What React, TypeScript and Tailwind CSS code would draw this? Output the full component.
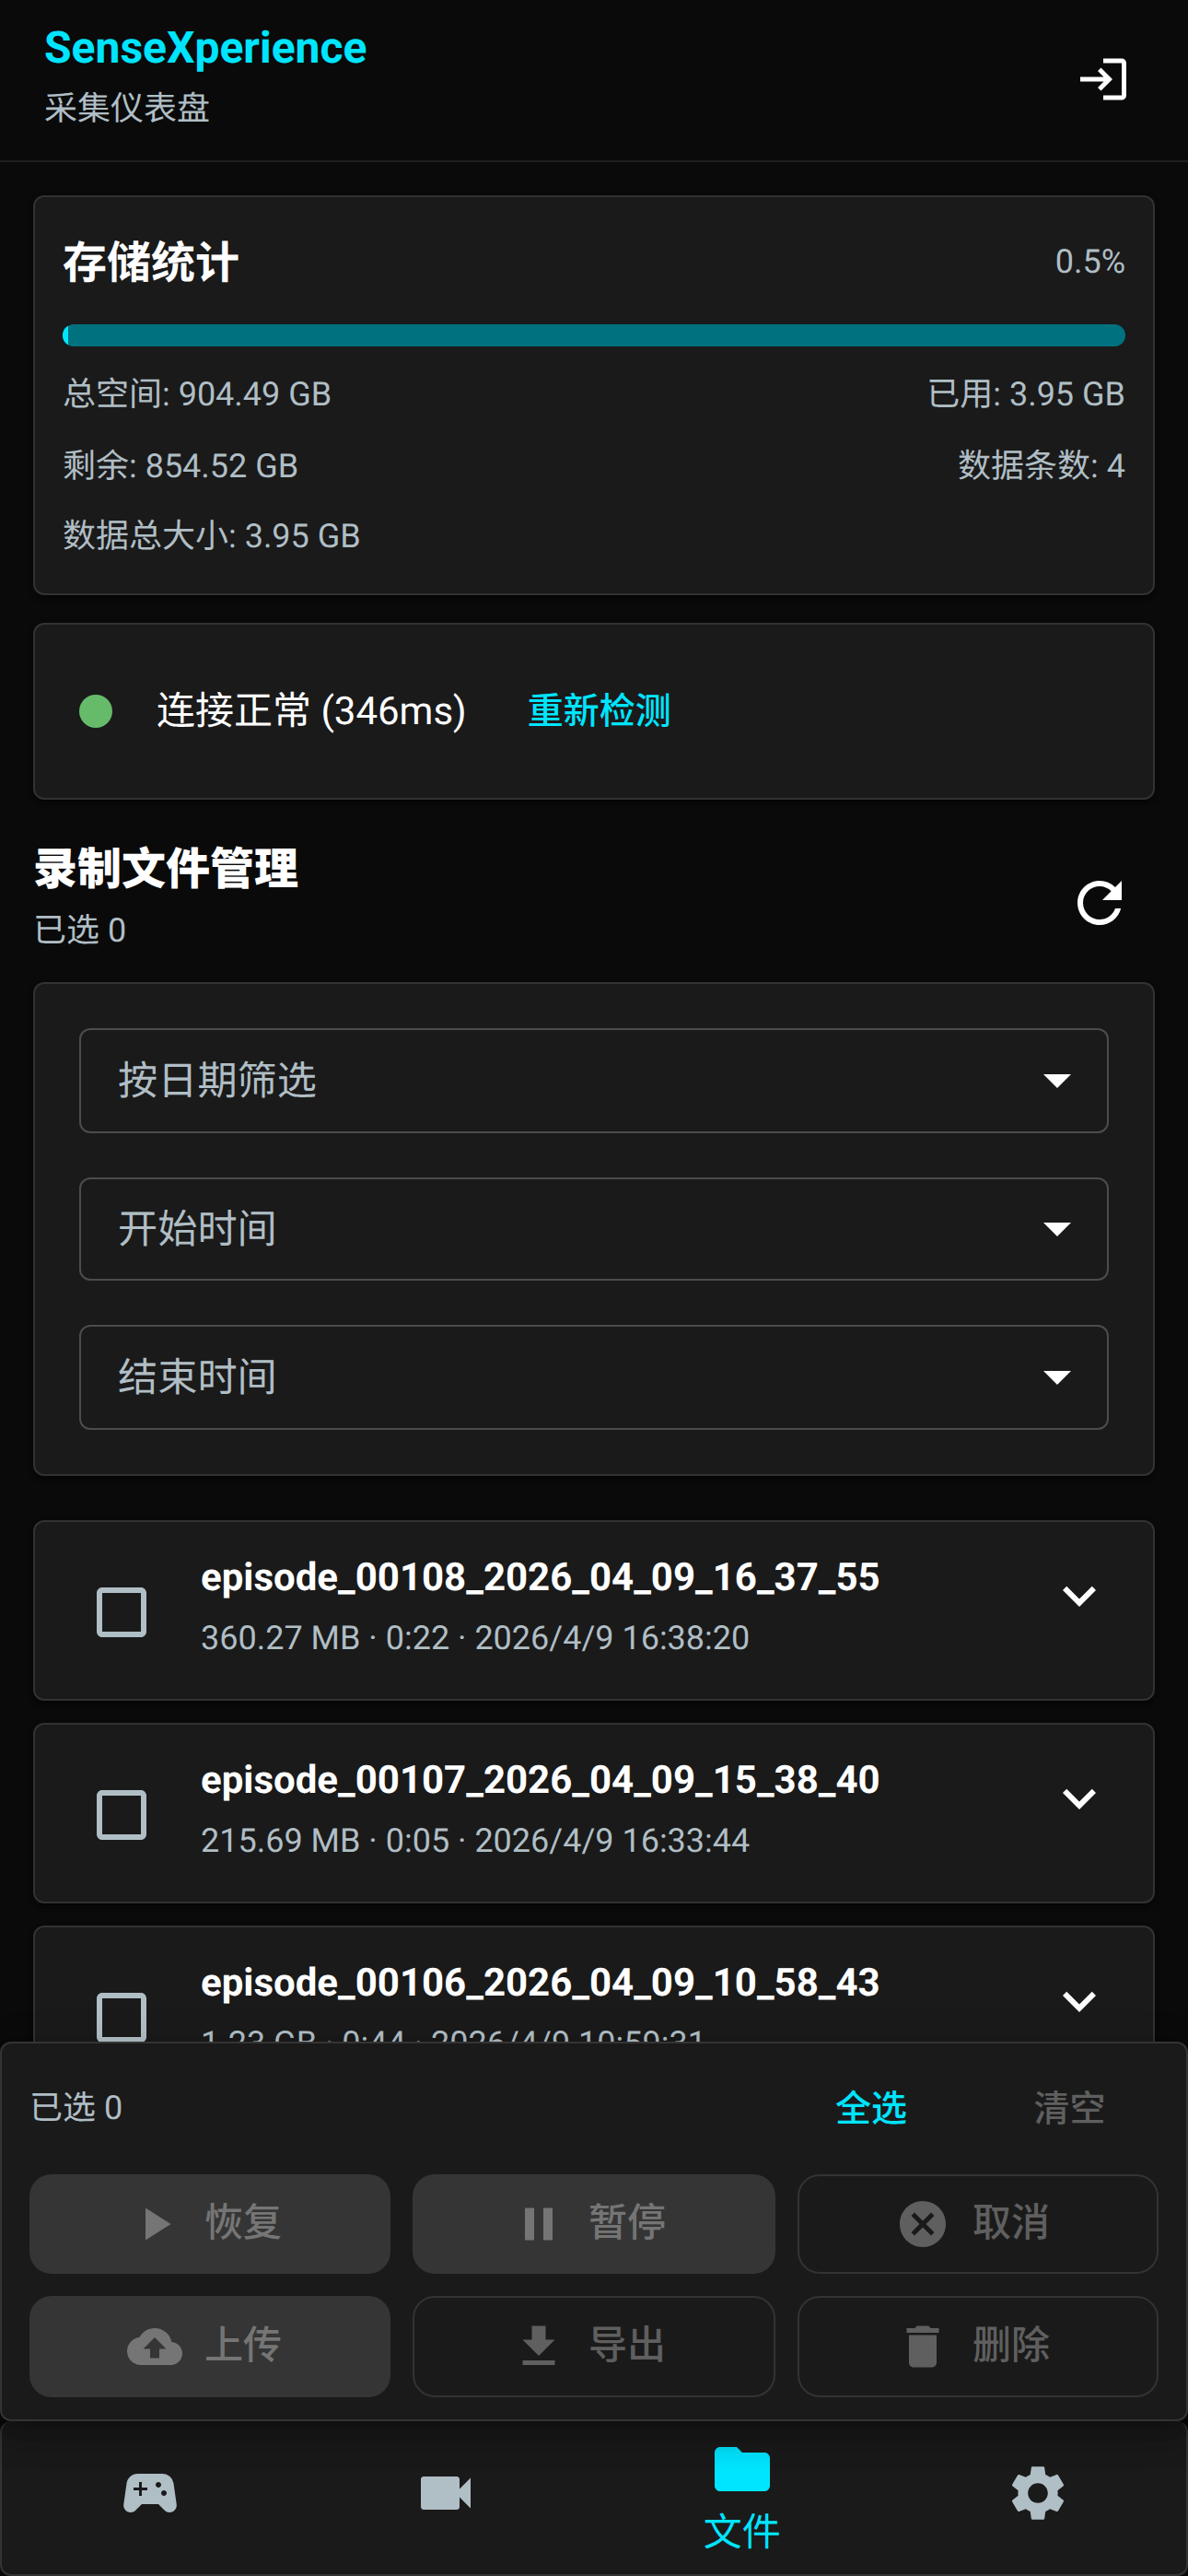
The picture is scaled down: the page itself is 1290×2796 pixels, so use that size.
import {
  MdArrowDropDown,
  MdCancel,
  MdCheckBoxOutlineBlank,
  MdCloudUpload,
  MdDelete,
  MdExpandMore,
  MdFolder,
  MdGetApp,
  MdLogin,
  MdPause,
  MdPlayArrow,
  MdRefresh,
  MdSettings,
  MdSportsEsports,
  MdVideocam,
} from "react-icons/md";

const episodes = [
  { name: "episode_00108_2026_04_09_16_37_55", info: "360.27 MB · 0:22 · 2026/4/9 16:38:20" },
  { name: "episode_00107_2026_04_09_15_38_40", info: "215.69 MB · 0:05 · 2026/4/9 16:33:44" },
  { name: "episode_00106_2026_04_09_10_58_43", info: "1.23 GB · 0:44 · 2026/4/9 10:59:31" },
];

const filters = ["按日期筛选", "开始时间", "结束时间"];

const actions = [
  { label: "恢复", icon: MdPlayArrow, filled: true },
  { label: "暂停", icon: MdPause, filled: true },
  { label: "取消", icon: MdCancel, filled: false },
  { label: "上传", icon: MdCloudUpload, filled: true },
  { label: "导出", icon: MdGetApp, filled: false },
  { label: "删除", icon: MdDelete, filled: false },
];

const tabs = [
  { label: "控制", icon: MdSportsEsports },
  { label: "视频", icon: MdVideocam },
  { label: "文件", icon: MdFolder, active: true },
  { label: "设置", icon: MdSettings },
];

const cardClassName =
  "rounded-xl border-2 border-[#323232] bg-[#1a1a1a] shadow-[0_6px_3px_-3px_rgba(0,0,0,0.2),0_3px_3px_0_rgba(0,0,0,0.14),0_3px_9px_0_rgba(0,0,0,0.12)]";

const App = () => {

  return (
    <div className="relative flex flex-col w-[1290px] h-[2796px] overflow-hidden bg-[#0a0a0a] text-white font-[Roboto,'Noto_Sans_CJK_SC',sans-serif] [text-rendering:geometricPrecision]">

      {/* HEADER */}
      <header className="flex shrink-0 justify-between items-start h-[176px] pl-12 pr-[62px] border-b-2 border-[#1e1e1e]">
        <div className="flex flex-col pt-[22px]">
          <h1 className="text-[48px] leading-[60px] font-bold text-[#00e5ff]">SenseXperience</h1>
          <p className="mt-1.5 text-[36px] leading-[60px] text-[#b0bec5]">采集仪表盘</p>
        </div>
        <MdLogin className="size-[60px] mt-14" />
      </header>

      <main className="flex flex-col px-9 pt-9">

        {/* STORAGE */}
        <section className={`${cardClassName} h-[434px] px-[30px] pt-[38px]`}>
          <div className="flex justify-between items-center h-[66px]">
            <h2 className="pt-0.5 text-[48px] leading-[66px] font-bold">存储统计</h2>
            <span className="pb-0.5 text-[36px] text-[#b0bec5]">0.5%</span>
          </div>
          <div className="mt-[34px] h-6 rounded-full overflow-hidden bg-[#00727f]">
            <div className="h-full w-[0.5%] bg-[#00e5ff]" />
          </div>
          <div className="flex flex-col mt-[14px] text-[36px] leading-[77px] text-[#b0bec5]">
            <div className="flex justify-between">
              <span>总空间: 904.49 GB</span>
              <span>已用: 3.95 GB</span>
            </div>
            <div className="flex justify-between pt-px">
              <span>剩余: 854.52 GB</span>
              <span>数据条数: 4</span>
            </div>
            <div className="-mt-px">数据总大小: 3.95 GB</div>
          </div>
        </section>

        {/* CONNECTION */}
        <section className={`${cardClassName} flex items-center h-[192px] mt-[30px] px-12`}>
          <div className="size-9 rounded-full bg-[#66bb6a]" />
          <span className="ml-12 text-[42px]">连接正常 (346ms)</span>
          <button className="ml-[66px] text-[39px] font-medium text-[#00e5ff]">重新检测</button>
        </section>

        {/* FILES TITLE */}
        <div className="flex justify-between items-start h-[114px] mt-[45px] pr-6">
          <div className="flex flex-col">
            <h2 className="pt-px text-[48px] leading-[60px] font-black">录制文件管理</h2>
            <span className="text-[36px] leading-[54px] mt-[9px] text-[#b0bec5]">已选 0</span>
          </div>
          <MdRefresh className="size-[72px] mt-[31px]" />
        </div>

        {/* FILTERS */}
        <section className={`${cardClassName} flex flex-col gap-12 mt-[39px] h-[536px] pt-12 px-12`}>
          {filters.map((filter) => (
            <div key={filter} className="flex justify-between items-center h-[114px] even:h-[112px] pl-10 pr-[18px] rounded-xl border-2 border-[#4c4c4c]">
              <span className="pt-[3px] text-[43.2px] text-[#b0bec5]">{filter}</span>
              <MdArrowDropDown className="size-[72px] mb-0.5" />
            </div>
          ))}
        </section>

        {/* EPISODES */}
        <div className="flex flex-col gap-6 mt-12">
          {episodes.map((episode) => (
            <div key={episode.name} className={`${cardClassName} flex h-[196px] pl-[58px] pr-[44px]`}>
              <MdCheckBoxOutlineBlank className="size-[72px] mt-[62px] text-[#b0bec5]" />
              <div className="flex flex-1 flex-col ml-[50px] pt-[31px]">
                <span className="text-[42px] leading-[60px] font-bold">{episode.name}</span>
                <span className="mt-2 text-[36px] leading-[54px] text-[#b0bec5]">{episode.info}</span>
              </div>
              <MdExpandMore className="size-[72px] mt-11" />
            </div>
          ))}
        </div>

      </main>

      {/* SELECTION ACTIONS */}
      <div className="absolute left-0 right-0 bottom-[168px] z-10 h-[412px] rounded-xl border-2 border-[#343434] bg-[#1a1a1a] shadow-[0_15px_15px_-9px_rgba(0,0,0,0.2),0_24px_30px_3px_rgba(0,0,0,0.14),0_9px_42px_6px_rgba(0,0,0,0.12)]">
        <div className="flex items-center h-[142px] pl-[30px] pr-[19px]">
          <span className="flex-1 pb-0.5 text-[36px] text-[#b0bec5]">已选 0</span>
          <button className="w-[216px] text-[39px] font-medium text-[#00e5ff]">全选</button>
          <button className="w-[215px] text-[39px] font-medium text-[#5f5f5f]">清空</button>
        </div>
        <div className="grid grid-cols-[392px_394px_392px] grid-rows-[108px_110px] gap-6 px-[30px]">
          {actions.map(({ label, icon: Icon, filled }) => (
            <button
              key={label}
              className={
                filled
                  ? "flex justify-center items-center gap-6 pr-3 rounded-3xl bg-[#353535] text-[#757575] text-[42px] font-medium"
                  : "flex justify-center items-center gap-6 pr-3 rounded-3xl border-2 border-[#333] text-[#5f5f5f] text-[42px] font-medium"
              }
            >
              <Icon className="size-[60px]" />
              <span className="pb-1">{label}</span>
            </button>
          ))}
        </div>
      </div>

      {/* BOTTOM NAVIGATION */}
      <nav className="absolute left-0 right-0 bottom-0 flex h-[168px] rounded-xl border-2 border-t-0 border-[#343434] bg-[#1a1a1a]">
        {tabs.map(({ label, icon: Icon, active }) => (
          <div
            key={label}
            className={
              active
                ? "flex flex-1 flex-col items-center pt-4 text-[#00e5ff]"
                : "flex flex-1 flex-col items-center pt-[42px] text-[#b0bec5]"
            }
          >
            <Icon className="size-[72px]" />
            {active && <span className="mt-1 text-[42px] leading-[60px]">{label}</span>}
          </div>
        ))}
      </nav>

    </div>
  )
}

export default App
